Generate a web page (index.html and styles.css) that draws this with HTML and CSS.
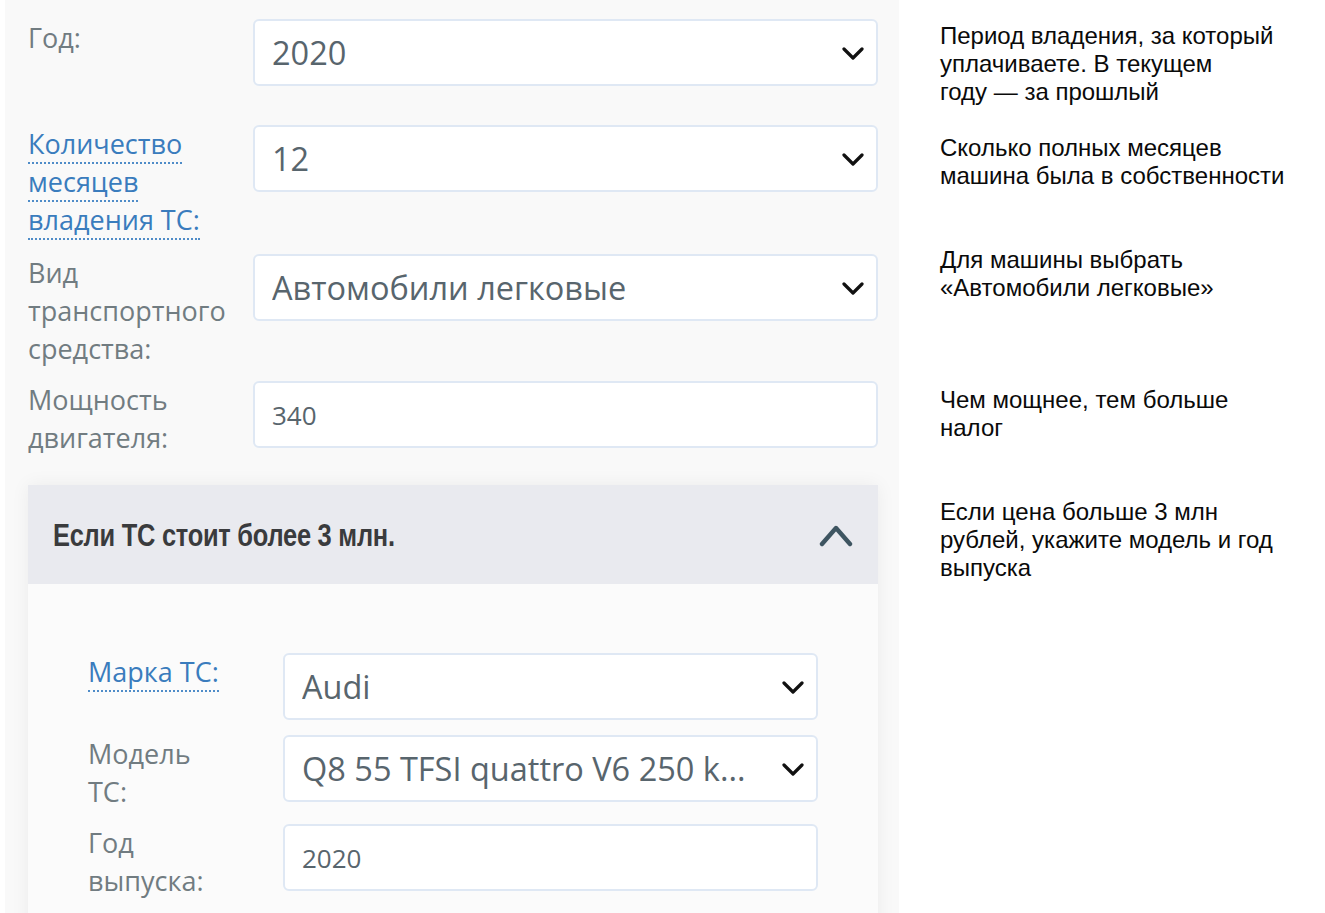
FILE: index.html
```html
<!DOCTYPE html>
<html lang="ru">
<head>
<meta charset="utf-8">
<title>Налог</title>
<link rel="stylesheet" href="styles.css">
</head>
<body>
<div class="page">
  <div class="panel">
    <div class="row r1">
      <div class="label">Год:</div>
      <div class="field select">
        <span class="value">2020</span>
        <svg class="chev" viewBox="0 0 22 14" width="22" height="14"><polyline points="2,2 11,11 20,2" fill="none" stroke="#111" stroke-width="3.2" stroke-linecap="round" stroke-linejoin="round"/></svg>
      </div>
    </div>
    <div class="row r2">
      <div class="label"><span class="link">Количество месяцев владения ТС:</span></div>
      <div class="field select">
        <span class="value">12</span>
        <svg class="chev" viewBox="0 0 22 14" width="22" height="14"><polyline points="2,2 11,11 20,2" fill="none" stroke="#111" stroke-width="3.2" stroke-linecap="round" stroke-linejoin="round"/></svg>
      </div>
    </div>
    <div class="row r3">
      <div class="label">Вид транспортного средства:</div>
      <div class="field select">
        <span class="value">Автомобили легковые</span>
        <svg class="chev" viewBox="0 0 22 14" width="22" height="14"><polyline points="2,2 11,11 20,2" fill="none" stroke="#111" stroke-width="3.2" stroke-linecap="round" stroke-linejoin="round"/></svg>
      </div>
    </div>
    <div class="row r4">
      <div class="label">Мощность двигателя:</div>
      <div class="field input">
        <span class="value">340</span>
      </div>
    </div>

    <div class="collapse">
      <div class="collapse-head">
        <span class="collapse-title">Если ТС стоит более 3 млн.</span>
        <svg class="chev-up" viewBox="0 0 34 26" width="34" height="26"><polyline points="3,22 17,6 31,22" fill="none" stroke="#3e5561" stroke-width="4.4" stroke-linecap="round" stroke-linejoin="round"/></svg>
      </div>
      <div class="collapse-body">
        <div class="row inner i1">
          <div class="label"><span class="link">Марка ТС:</span></div>
          <div class="field select">
            <span class="value">Audi</span>
            <svg class="chev" viewBox="0 0 22 14" width="22" height="14"><polyline points="2,2 11,11 20,2" fill="none" stroke="#111" stroke-width="3.2" stroke-linecap="round" stroke-linejoin="round"/></svg>
          </div>
        </div>
        <div class="row inner i2">
          <div class="label">Модель ТС:</div>
          <div class="field select">
            <span class="value">Q8 55 TFSI quattro V6 250 k...</span>
            <svg class="chev" viewBox="0 0 22 14" width="22" height="14"><polyline points="2,2 11,11 20,2" fill="none" stroke="#111" stroke-width="3.2" stroke-linecap="round" stroke-linejoin="round"/></svg>
          </div>
        </div>
        <div class="row inner i3">
          <div class="label">Год выпуска:</div>
          <div class="field input">
            <span class="value">2020</span>
          </div>
        </div>
      </div>
    </div>
  </div>

  <div class="notes">
    <p class="note n1">Период владения, за который<br>уплачиваете. В текущем<br>году — за прошлый</p>
    <p class="note n2">Сколько полных месяцев<br>машина была в собственности</p>
    <p class="note n3">Для машины выбрать<br>«Автомобили легковые»</p>
    <p class="note n4">Чем мощнее, тем больше<br>налог</p>
    <p class="note n5">Если цена больше 3 млн<br>рублей, укажите модель и год<br>выпуска</p>
  </div>
</div>
</body>
</html>
```
FILE: styles.css
```css
html, body {
  margin: 0;
  padding: 0;
  background: #ffffff;
}
body {
  font-family: "Open Sans", "Noto Sans", sans-serif;
  overflow: hidden;
  height: 913px;
}
.page {
  display: flex;
  align-items: stretch;
  height: 913px;
}
.panel {
  margin-left: 5px;
  width: 894px;
  box-sizing: border-box;
  background: #f9f9f9;
  padding: 19px 21px 0 23px;
  overflow: hidden;
}
.row {
  display: flex;
  align-items: flex-start;
}
.r1 { margin-bottom: 39px; }
.r2 { margin-bottom: 15px; }
.r3 { margin-bottom: 13px; }
.r4 { margin-bottom: 28px; }
.i1 { margin-bottom: 15px; }
.i2 { margin-bottom: 13px; }
.label {
  width: 205px;
  margin-right: 20px;
  flex: none;
  font-size: 27px;
  line-height: 38px;
  color: #717c81;
}
.link {
  color: #3a7cbd;
  border-bottom: 2px dotted #4f8cc8;
}
.field {
  flex: 1;
  height: 67px;
  box-sizing: border-box;
  background: #ffffff;
  border: 2px solid #dfe8f4;
  border-radius: 6px;
  display: flex;
  align-items: center;
  padding-left: 17px;
  padding-right: 12px;
  color: #58656d;
}
.select .value {
  font-size: 32.5px;
  flex: 1;
  white-space: nowrap;
  overflow: hidden;
}
.input .value {
  font-size: 26px;
}
.chev {
  flex: none;
  margin-top: 2px;
}
.collapse {
  box-shadow: 0 0 18px rgba(0, 0, 0, 0.06);
}
.collapse-head {
  height: 99px;
  background: #e9eaef;
  display: flex;
  align-items: center;
  justify-content: space-between;
  padding: 0 25px 0 25px;
}
.collapse-title {
  font-family: "Liberation Sans Narrow", "Liberation Sans", sans-serif;
  font-weight: bold;
  font-size: 31px;
  color: #3a3b3d;
  letter-spacing: -0.3px;
  transform: scaleX(0.82);
  transform-origin: left center;
  white-space: nowrap;
  margin-top: 2px;
}
.chev-up {
  flex: none;
  margin-top: 1px;
}
.collapse-body {
  background: #fbfbfb;
  padding: 69px 60px 40px 60px;
}
.inner .label {
  width: 140px;
  margin-right: 55px;
}
.notes {
  padding-left: 41px;
  padding-top: 22px;
  font-family: "Liberation Sans", Arial, sans-serif;
  font-size: 24px;
  line-height: 28px;
  color: #0a0a0a;
}
.note {
  margin: 0;
}
.n2 { margin-top: 28px; }
.n3 { margin-top: 56px; }
.n4 { margin-top: 84px; }
.n5 { margin-top: 56px; }
```
